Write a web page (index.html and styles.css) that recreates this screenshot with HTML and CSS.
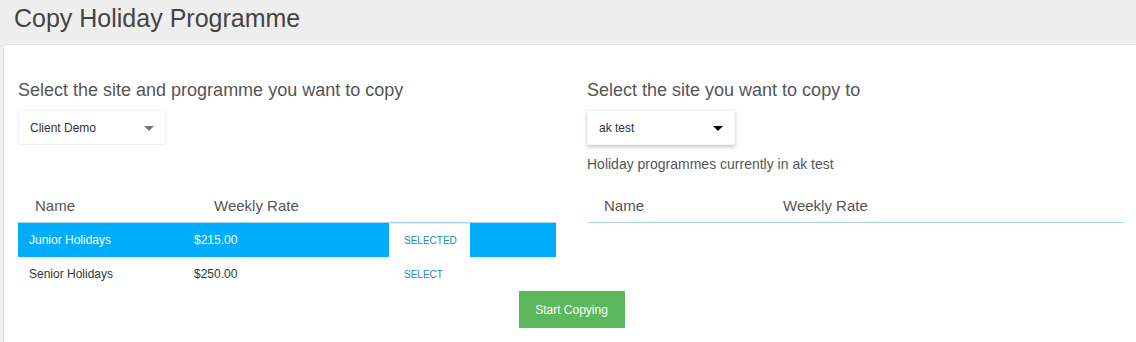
FILE: index.html
```html
<!DOCTYPE html>
<html lang="en">
<head>
  <meta charset="UTF-8">
  <meta name="viewport" content="width=device-width, initial-scale=1.0">
  <title>Copy Holiday Programme</title>
  <link rel="stylesheet" href="styles.css">
</head>
<body>
  <header class="page-title">
    <h1>Copy Holiday Programme</h1>
  </header>

  <main class="panel">
    <div class="copy-grid">
      <h2 class="col-title">Select the site and programme you want to copy</h2>
      <h2 class="col-title">Select the site you want to copy to</h2>

      <!-- Site pickers -->
      <div class="picker picker-plain">
        <span>Client Demo</span>
        <span class="caret"></span>
      </div>
      <div class="picker picker-raised">
        <span>ak test</span>
        <span class="caret"></span>
      </div>

      <div class="note"></div>
      <p class="note">Holiday programmes currently in ak test</p>

      <!-- Source programmes -->
      <div class="prog-table">
        <div class="prog-head">
          <span>Name</span>
          <span>Weekly Rate</span>
        </div>
        <div class="prog-row selected">
          <span>Junior Holidays</span>
          <span>$215.00</span>
          <button class="pick-btn">Selected</button>
        </div>
        <div class="prog-row">
          <span>Senior Holidays</span>
          <span>$250.00</span>
          <button class="pick-btn">Select</button>
        </div>
      </div>

      <!-- Target programmes -->
      <div class="prog-table">
        <div class="prog-head">
          <span>Name</span>
          <span>Weekly Rate</span>
        </div>
      </div>
    </div>

    <div class="actions">
      <button class="start-btn">Start Copying</button>
    </div>
  </main>
</body>
</html>
```

FILE: styles.css
```css
html, body {
  height: 100%;
}
body {
  font-family: "Liberation Sans", Arial, sans-serif;
  margin: 0;
  padding: 0;
  background-color: #eeeeee;
  color: #333;
  overflow: hidden;
}
.page-title {
  height: 44px;
  padding-left: 14px;
}
.page-title h1 {
  margin: 0;
  font-size: 25px;
  font-weight: normal;
  line-height: 36px;
  color: #444;
}
.panel {
  box-sizing: border-box;
  margin-left: 3px;
  width: 1137px;
  height: calc(100% - 44px);
  padding: 35px 14px 0;
  background-color: #fff;
  border: 1px solid #e2e2e2;
  border-bottom: none;
  border-radius: 4px 0 0 0;
}
.copy-grid {
  display: grid;
  grid-template-columns: 538px 538px;
  column-gap: 31px;
  align-items: start;
}
.col-title {
  margin: 0 0 10px;
  font-size: 18px;
  font-weight: normal;
  line-height: 20px;
  color: #555;
}
.picker {
  box-sizing: border-box;
  width: 148px;
  height: 35px;
  padding: 0 11px;
  display: flex;
  align-items: center;
  justify-content: space-between;
  font-size: 12px;
  color: #333;
  background-color: #fff;
}
.picker-plain {
  border: 1px solid #f1f1f1;
}
.picker-plain .caret {
  border-top-color: #777;
}
.picker-raised {
  border: 1px solid #f4f4f4;
  box-shadow: 0 2px 4px rgba(0, 0, 0, 0.22);
}
.picker-raised .caret {
  border-top-color: #000;
}
.caret {
  width: 0;
  height: 0;
  border-left: 5px solid transparent;
  border-right: 5px solid transparent;
  border-top: 5px solid #777;
  margin-top: 1px;
}
.note {
  margin: 9px 0 0;
  height: 20px;
  font-size: 14px;
  line-height: 20px;
  color: #555;
}
.prog-table {
  margin-top: 15px;
}
.prog-head {
  box-sizing: border-box;
  height: 34px;
  display: grid;
  grid-template-columns: 179px 1fr;
  align-items: center;
  padding-left: 17px;
  font-size: 15px;
  color: #555;
  border-bottom: 1px solid #a8d5e5;
}
.prog-row {
  height: 34px;
  display: grid;
  grid-template-columns: 165px 195px 81px;
  align-items: stretch;
  padding-left: 11px;
  font-size: 12px;
  color: #333;
}
.prog-row span {
  align-self: center;
}
.prog-row.selected {
  background-color: #00adfd;
  color: #fff;
}
.pick-btn {
  font-family: inherit;
  font-size: 10px;
  text-transform: uppercase;
  text-align: left;
  padding: 0 0 0 15px;
  margin: 0;
  border: none;
  background: transparent;
  color: #2389b8;
  cursor: pointer;
}
.selected .pick-btn {
  background-color: #fff;
  border-top: 1px solid #d8eef8;
}
.actions {
  display: flex;
  justify-content: center;
}
.start-btn {
  width: 106px;
  height: 37px;
  font-family: inherit;
  font-size: 12px;
  color: #fff;
  background-color: #5cb85c;
  border: none;
  cursor: pointer;
}
```
